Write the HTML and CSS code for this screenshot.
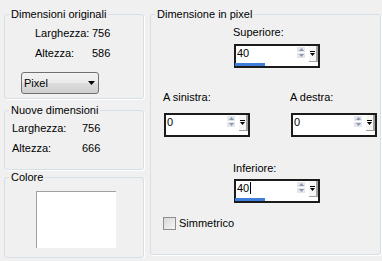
FILE: index.html
```html
<!DOCTYPE html>
<html lang="it">
<head>
	<meta charset="UTF-8">
	<title>Dimensioni tela</title>
	<link rel="stylesheet" href="styles.css">
</head>
<body>
	<div class="page">
		<div class="left">
			<fieldset class="box box-orig">
				<legend>Dimensioni originali</legend>
				<div class="rows">
					<span>Larghezza:</span><span>756</span>
					<span>Altezza:</span><span>586</span>
				</div>
				<div class="select">
					<span>Pixel</span>
					<svg width="7" height="4" viewBox="0 0 7 4"><polygon points="0,0 7,0 3.5,4" fill="#000"/></svg>
				</div>
			</fieldset>
			<fieldset class="box box-new">
				<legend>Nuove dimensioni</legend>
				<div class="rows">
					<span>Larghezza:</span><span>756</span>
					<span>Altezza:</span><span>666</span>
				</div>
			</fieldset>
			<fieldset class="box box-color">
				<legend>Colore</legend>
				<div class="swatch"></div>
			</fieldset>
		</div>

		<fieldset class="box box-px">
			<legend>Dimensione in pixel</legend>
			<div class="px-body">

				<div class="field field-top">
					<label>Superiore:</label>
					<div class="spin">
						<div class="spin-text"><span>40</span><i class="bar"></i></div>
						<div class="spin-arrows">
							<b><svg width="5" height="3" viewBox="0 0 5 3"><polygon points="0,3 5,3 2.5,0" fill="#8a97ad"/></svg></b>
							<b><svg width="5" height="3" viewBox="0 0 5 3"><polygon points="0,0 5,0 2.5,3" fill="#8a97ad"/></svg></b>
						</div>
						<div class="spin-drop"><svg width="5" height="6" viewBox="0 0 5 6"><rect x="0" y="0" width="5" height="1" fill="#000"/><polygon points="0,2 5,2 2.5,5" fill="#000"/></svg></div>
					</div>
				</div>

				<div class="pair">
					<div class="field">
						<label>A sinistra:</label>
						<div class="spin">
							<div class="spin-text"><span>0</span></div>
							<div class="spin-arrows">
								<b><svg width="5" height="3" viewBox="0 0 5 3"><polygon points="0,3 5,3 2.5,0" fill="#8a97ad"/></svg></b>
								<b><svg width="5" height="3" viewBox="0 0 5 3"><polygon points="0,0 5,0 2.5,3" fill="#8a97ad"/></svg></b>
							</div>
							<div class="spin-drop"><svg width="5" height="6" viewBox="0 0 5 6"><rect x="0" y="0" width="5" height="1" fill="#000"/><polygon points="0,2 5,2 2.5,5" fill="#000"/></svg></div>
						</div>
					</div>
					<div class="field">
						<label>A destra:</label>
						<div class="spin">
							<div class="spin-text"><span>0</span></div>
							<div class="spin-arrows">
								<b><svg width="5" height="3" viewBox="0 0 5 3"><polygon points="0,3 5,3 2.5,0" fill="#8a97ad"/></svg></b>
								<b><svg width="5" height="3" viewBox="0 0 5 3"><polygon points="0,0 5,0 2.5,3" fill="#8a97ad"/></svg></b>
							</div>
							<div class="spin-drop"><svg width="5" height="6" viewBox="0 0 5 6"><rect x="0" y="0" width="5" height="1" fill="#000"/><polygon points="0,2 5,2 2.5,5" fill="#000"/></svg></div>
						</div>
					</div>
				</div>

				<div class="field field-bottom">
					<label>Inferiore:</label>
					<div class="spin">
						<div class="spin-text"><span>40<em class="caret"></em></span><i class="bar"></i></div>
						<div class="spin-arrows">
							<b><svg width="5" height="3" viewBox="0 0 5 3"><polygon points="0,3 5,3 2.5,0" fill="#8a97ad"/></svg></b>
							<b><svg width="5" height="3" viewBox="0 0 5 3"><polygon points="0,0 5,0 2.5,3" fill="#8a97ad"/></svg></b>
						</div>
						<div class="spin-drop"><svg width="5" height="6" viewBox="0 0 5 6"><rect x="0" y="0" width="5" height="1" fill="#000"/><polygon points="0,2 5,2 2.5,5" fill="#000"/></svg></div>
					</div>
				</div>

				<label class="check"><span class="check-box"></span>Simmetrico</label>
			</div>
		</fieldset>
	</div>
</body>
</html>
```

FILE: styles.css
```css
body{
	margin: 0;
	padding: 0;
	background: #f0f0f0;
	font-family: "Liberation Sans", Arial, sans-serif;
	font-size: 11px;
	color: #000;
}
.page{
	display: flex;
	padding-left: 4px;
	gap: 6px;
}
.left{
	width: 140px;
	display: flex;
	flex-direction: column;
}
.box{
	box-sizing: border-box;
	margin: 0;
	padding: 0;
	min-width: 0;
	border: 1px solid #d5dfe5;
	border-radius: 3px;
	box-shadow: 1px 1px 0 #fff;
}
.box legend{
	padding: 0 2px;
	margin-left: 4px;
	line-height: 13px;
}
.box-orig{ margin-top: 8px; height: 91px; }
.box-new{ margin-top: 5px; height: 66px; }
.box-color{ margin-top: 1px; height: 87px; }
.box-px{
	margin-top: 8px;
	height: 247px;
	width: 231px;
}
.px-body{
	padding-left: 12px;
}

/* righe etichetta / valore */
.rows{
	display: grid;
	grid-auto-rows: 20px;
	align-items: center;
}
.box-orig .rows{
	grid-template-columns: 57px auto;
	padding: 2px 0 0 30px;
}
.box-new .rows{
	grid-template-columns: 70px auto;
	padding: 1px 0 0 7px;
}

.select{
	box-sizing: border-box;
	width: 78px;
	height: 22px;
	margin: 9px 0 0 16px;
	border: 1px solid #707070;
	border-radius: 3px;
	background: linear-gradient(#f2f2f2, #ebebeb 50%, #dddddd 50%, #cfcfcf);
	display: flex;
	align-items: center;
	justify-content: space-between;
	padding: 0 3px 0 2px;
}

.swatch{
	width: 80px;
	height: 57px;
	margin: 7px 0 0 31px;
	box-sizing: border-box;
	background: #fff;
	border-top: 1px solid #a0a0a0;
	border-left: 1px solid #a0a0a0;
}

/* campi numerici */
.field label{
	display: block;
	line-height: 14px;
}
.field .spin{ margin-left: 1px; }
.field-top{
	margin: 4px 0 0 70px;
}
.field-top label{ margin-bottom: 5px; }
.pair{
	display: flex;
	gap: 40px;
	margin-top: 22px;
}
.pair label{ margin-bottom: 9px; }
.field-bottom{
	margin: 24px 0 0 70px;
}
.field-bottom label{ margin-bottom: 4px; }

.spin{
	box-sizing: border-box;
	width: 86px;
	height: 24px;
	border: 2px solid #1b1b1b;
	background: #fff;
	display: flex;
}
.spin-text{
	width: 61px;
	display: flex;
	flex-direction: column;
	justify-content: space-between;
}
.spin-text span{
	padding-left: 1px;
	line-height: 14px;
	display: flex;
	align-items: center;
}
.caret{
	display: inline-block;
	width: 1px;
	height: 12px;
	background: #000;
	margin-left: 1px;
}
.bar{
	display: block;
	width: 30px;
	height: 3px;
	margin-left: -1px;
	background: #3d7fd9;
}
.spin-arrows{
	width: 8px;
	margin: 1px 4px 0 0;
	display: flex;
	flex-direction: column;
	gap: 1px;
}
.spin-arrows b{
	height: 5px;
	background: #e2e5eb;
	display: flex;
	align-items: center;
	justify-content: center;
}
.spin-drop{
	box-sizing: border-box;
	width: 9px;
	height: 16px;
	background: #f6f6f6;
	border-right: 2px solid #a3a3a3;
	border-bottom: 1px solid #a3a3a3;
	display: flex;
	align-items: center;
	justify-content: center;
}

.check{
	display: flex;
	align-items: center;
	margin-top: 13px;
	line-height: 14px;
}
.check-box{
	box-sizing: border-box;
	width: 13px;
	height: 13px;
	margin-right: 3px;
	border: 1px solid #8e8f8f;
	background: linear-gradient(135deg, #d8d8d8, #f6f6f6);
}
```
